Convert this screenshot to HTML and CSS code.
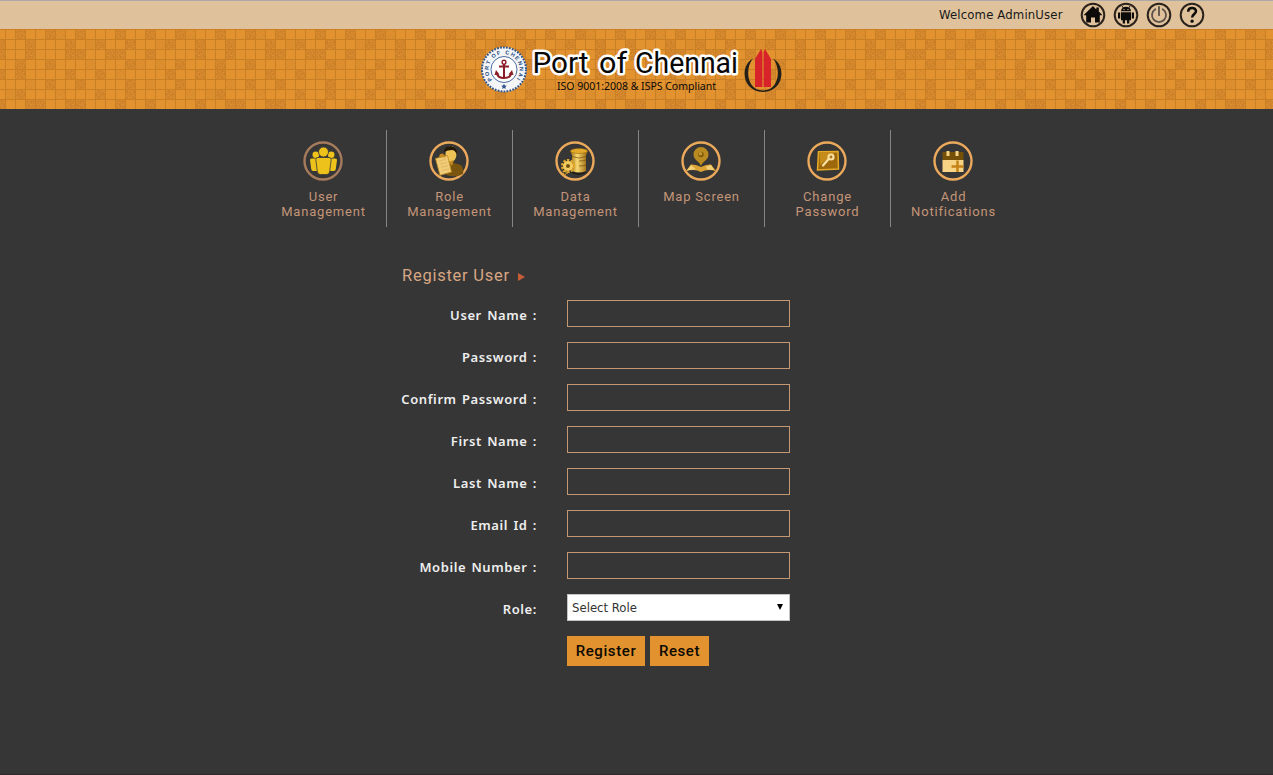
FILE: index.html
```
<!DOCTYPE html>
<html lang="en">
<head>
<meta charset="utf-8">
<title>Port of Chennai</title>
<link rel="stylesheet" href="styles.css">
</head>
<body>
<div class="topbar">
  <span class="welcome">Welcome AdminUser</span>
  <svg class="tool" viewBox="0 0 26 26"><circle class="ring" cx="13" cy="13" r="11.3"/><path d="M13 4 3.500 13.200h2.700V20.500h4.800v-5h4v5h4.800v-7.300h2.700l-3.700-3.600V5.500h-2.500v1.900z"/></svg>
  <svg class="tool" viewBox="0 0 26 26"><circle class="ring" cx="13" cy="13" r="11.3"/><path d="M8 9.300a5 4.500 0 0 1 10 0zM8 10.200h10v8H8zM5 10.400h2.200v6H5zM18.800 10.400H21v6h-2.200zM9.700 17.500H12v4H9.700zM14 17.500h2.300v4H14z"/><path d="m9 4 2 3m6-3-2 3" stroke="#111"/><circle class="eye" cx="11" cy="7.600" r=".7"/><circle class="eye" cx="15" cy="7.600" r=".7"/></svg>
  <svg class="tool" viewBox="0 0 26 26"><circle class="ring" cx="13" cy="13" r="11.3"/><path class="power" d="M9.300 7.200a7 7 0 1 0 7.400 0M13 4.800v8.400"/></svg>
  <svg class="tool" viewBox="0 0 26 26"><circle class="ring" cx="13" cy="13" r="11.3"/><path class="question" d="M9.200 9.800c0-5 7.800-4.700 7.800-.6 0 2.700-3.900 3-3.900 6.400"/><circle cx="13.100" cy="19.200" r="1.600"/></svg>
</div>

<header class="banner">
  <svg class="banner-art" width="1273" height="80" viewBox="0 0 1273 80">
    <defs>
      <pattern id="speck" width="7" height="7" patternUnits="userSpaceOnUse"><path fill="#d2852a" d="M0 0h7v7H0z"/><path fill="#dd9033" d="M1 0h1v1H1zM4 1h1v1H4zM2 3h1v1H2zM6 3h1v1H6zM0 5h1v1H0zM4 5h2v1H4z"/><path fill="#c97e27" d="M3 0h1v1H3zM0 2h1v1H0zM5 2h1v2H5zM2 5h1v1H2zM3 6h1v1H3z"/></pattern>
      <pattern id="tiles" x="5" width="200" height="80" patternUnits="userSpaceOnUse">
        <path fill="#e2932f" d="M0 0h200v80H0z"/>
        <path fill="url(#speck)" d="M10 0h10v10H10zM40 0h10v10H40zM70 0h10v10H70zM110 0h10v10h-10zM140 0h10v10h-10zM170 0h10v10h-10z
        M20 10h10v10H20zM60 10h10v10H60zM90 10h10v10H90zM120 10h10v10h-10zM160 10h10v10h-10zM190 10h10v10h-10z
        M20 20h10v10H20zM60 20h20v10H60zM100 20h20v10h-20zM140 20h10v10h-10zM190 20h10v10h-10z
        M10 30h10v20H10zM40 30h10v10H40zM120 30h10v10h-10zM170 30h10v10h-10z
        M60 40h10v10H60zM90 40h10v10H90zM160 40h10v10h-10zM190 40h10v10h-10z
        M40 50h10v10H40zM70 50h10v10H70zM120 50h10v20h-10zM170 50h10v10h-10z
        M10 60h10v10H10zM90 60h10v10H90zM160 60h10v10h-10z
        M20 70h20v10H20zM60 70h20v10H60zM110 70h10v10h-10zM140 70h10v10h-10zM190 70h10v10h-10z"/>
        <path fill="url(#speck)" opacity=".4" d="M50 0h10v10H50zM180 0h10v10h-10zM80 10h10v10H80zM150 10h10v10h-10zM80 30h10v10H80zM130 30h10v10h-10zM150 30h10v10h-10zM110 40h10v10h-10zM20 50h10v10H20zM140 50h10v10h-10zM0 60h10v10H0zM50 60h10v10H50zM180 60h10v10h-10z"/>
        <path fill="#c98025" d="M0 0h200v1H0zM0 10h200v1H0zM0 20h200v1H0zM0 30h200v1H0zM0 40h200v1H0zM0 50h200v1H0zM0 60h200v1H0zM0 70h200v1H0z"/>
        <path stroke="#c98025" stroke-width="80" stroke-dasharray="1 9" d="M0 40h200"/>
      </pattern>
      <path id="sealArc" d="M493 51.500a15.500 15.500 0 1 1 22 0"/>
    </defs>
    <path fill="url(#tiles)" d="M0 0h1273v80H0z"/>
    <!-- seal -->
    <circle cx="504" cy="40.500" r="22.500" fill="#f4f5f7"/>
    <circle cx="504" cy="40.500" r="22" fill="none" stroke="#305489" stroke-width="2" stroke-dasharray="1.800 1.200"/>
    <circle cx="504" cy="40.500" r="13" fill="#fff" stroke="#4a6aa0" stroke-width="1"/>
    <text class="seal-text"><textPath href="#sealArc" startOffset="1" textLength="69" lengthAdjust="spacing">PORT OF CHENNAI</textPath></text>
    <path fill="#2d4f86" d="m504 54.800.8 1.800 2 .1-1.500 1.300.5 2-1.800-1.100-1.800 1.100.5-2-1.500-1.300 2-.1z"/>
    <g fill="none" stroke="#891c25" stroke-width="2"><circle cx="504" cy="33.200" r="1.900" stroke-width="1.400"/><path d="M504 35v14M499 37.500h10M497 44.500c.5 3 3.500 4.500 7 4.500s6.500-1.500 7-4.500"/></g>
    <path fill="#891c25" d="m494.500 46 1.500-5 3.500 4.500zM513.500 46l-1.500-5-3.500 4.500z"/>
    <g class="brand">
      <text x="532.500" y="44" textLength="56" lengthAdjust="spacingAndGlyphs">Port</text>
      <text x="599" y="44" textLength="28" lengthAdjust="spacingAndGlyphs">of</text>
      <text x="635" y="44" textLength="103" lengthAdjust="spacingAndGlyphs">Chennai</text>
    </g>
    <text class="tagline" x="557" y="61" textLength="159" lengthAdjust="spacingAndGlyphs">ISO 9001:2008 &amp; ISPS Compliant</text>
    <!-- twin tower emblem -->
    <path fill="#222019" d="M753 29.500C740 36 741 62 763 63c22-1 23-27 10-33.500 8 9 7 31.500-10 32-17-.5-18-23-10-32z"/>
    <path fill="#d72329" d="M755 58V30l6-10 1.400 3v35zM763.600 58V23l1.400-3 6 10v28z"/>
  </svg>
</header>

<nav class="menu">
  <a class="item"><svg class="badge" viewBox="0 0 40 40"><circle class="halo dim" cx="20" cy="20" r="18.500"/><g fill="#edc21b"><circle cx="12.800" cy="13.800" r="3.300"/><circle cx="28.200" cy="13.800" r="3.300"/><path d="M7 19q0-1.500 1.500-1.500H14L15 30h-5q-1.500 0-1.800-2zM34 19q0-1.500-1.500-1.500H27L26 30h5q1.500 0 1.800-2z"/></g><g fill="#edc21b" stroke="#363636" stroke-width=".8"><circle cx="20.500" cy="11" r="5"/><path d="M12.800 18.500q0-2 2-2h11.400q2 0 2 2l-1.500 12q-.4 3-3 3h-6.400q-2.600 0-3-3z"/></g></svg><span>User Management</span></a>
  <a class="item"><svg class="badge" viewBox="0 0 40 40"><circle class="halo" cx="20" cy="20" r="18.500"/><path fill="#7a5510" d="M17 34c0-7 3-11 8-12l7 2q3 3 2 9-5 3-13 2z"/><ellipse cx="22" cy="13" rx="5.500" ry="8" fill="#efc356"/><path fill="#241a08" d="M15 11q0-6 7-6 7 1 6 9-2-5-5-5-4 0-8 2z"/><path fill="#c28a20" d="m19 21 6-2-2 6z"/><path fill="#f0cc78" stroke="#c08a20" stroke-width=".8" d="m6.500 17.500 12-3 4 16.500-11.500 3.300z"/><path fill="#c48920" d="m10 16 1-3 3-.5 2 2 .5 2z"/><path d="m10 20 7-1.800m-6 5 7-1.800m-6 5 7-1.800m-6 5 7-1.800" stroke="#d2a24a" stroke-width=".5"/></svg><span>Role Management</span></a>
  <a class="item"><svg class="badge" viewBox="0 0 40 40"><defs><linearGradient id="gold"><stop stop-color="#9b6607"/><stop offset=".4" stop-color="#f9d974"/><stop offset="1" stop-color="#946006"/></linearGradient></defs><circle class="halo" cx="20" cy="20" r="18.500"/><path fill="#211d16" d="M15 31q9 6 17 0z"/><path fill="url(#gold)" d="M15 10l2 4v16q7 3 14 0V14l2-4z"/><path fill="none" stroke="#73500c" stroke-width=".7" d="M17 15.500q7 3 14 0M24 20q4 0 7-1M24 25q4 0 7-1"/><ellipse cx="24" cy="10" rx="8.500" ry="2.500" fill="#e4aa2a" stroke="#9b6910" stroke-width=".6"/><circle cx="13" cy="25" r="5.700" fill="none" stroke="#dea626" stroke-width="2.800" stroke-dasharray="2.200 1.400"/><circle cx="13" cy="25" r="3.500" fill="#70500e" stroke="#f3cb60" stroke-width="3"/><circle cx="10" cy="31.500" r="2" fill="none" stroke="#e2a72a" stroke-width="1.500" stroke-dasharray="1.200 .8"/></svg><span>Data Management</span></a>
  <a class="item"><svg class="badge" viewBox="0 0 40 40"><circle class="halo" cx="20" cy="20" r="18.500"/><path fill="#dda334" d="m4.500 30.500 5.500-7q5-.5 10 2.500 5-3 10-2.500l5.500 7q-8.500-3-15.500.5-7-3.500-15.500-.5z"/><path fill="#f2ce79" d="m10 24 5 4.500-9 .7zM30 24l-5 1.500 1 3 7 .5z"/><path fill="#b98a20" d="M20 25c-2-5-7.500-6-7.500-11.500a7.500 7.500 0 0 1 15 0C27.500 19 22 20 20 25z"/><circle cx="20" cy="13.500" r="2.700" fill="#7d590c"/><circle cx="19.500" cy="12.800" r="1.700" fill="#c99a30"/></svg><span>Map Screen</span></a>
  <a class="item"><svg class="badge" viewBox="0 0 40 40"><circle class="halo" cx="20" cy="20" r="18.500"/><path fill="#9c680b" stroke="#e7aa27" stroke-width="1.500" d="m11.500 10.800 19.500-.3.500 17.500-21 1z"/><path fill="#c58c1c" d="m12.500 12 16-.8-15.500 12.800z"/><path stroke="#fae0a0" stroke-width="2.300" stroke-linecap="round" d="m16 24.500 6.500-7.500"/><circle cx="24" cy="16" r="2.500" fill="#aa7618" stroke="#fae0a0" stroke-width="2.200"/></svg><span>Change Password</span></a>
  <a class="item"><svg class="badge" viewBox="0 0 40 40"><circle class="halo" cx="20" cy="20" r="18.500"/><path fill="#755009" d="M9.500 11h21v8h-21z"/><path fill="#f7d386" d="M9.500 19h21v12h-21zM13.500 10h3v5h-3zM22.500 10h3v5h-3z"/><path d="M18.500 25.500h12M24.500 19.500V31" stroke="#c58317" stroke-width="2.500"/></svg><span>Add Notifications</span></a>
</nav>

<main class="register">
  <h1 class="heading">Register User<i class="arrow"></i></h1>
  <form class="form">
    <label class="label">User Name :</label><input class="field">
    <label class="label">Password :</label><input class="field">
    <label class="label">Confirm Password :</label><input class="field">
    <label class="label">First Name :</label><input class="field">
    <label class="label">Last Name :</label><input class="field">
    <label class="label">Email Id :</label><input class="field">
    <label class="label">Mobile Number :</label><input class="field">
    <label class="label">Role:</label><div class="select"><span>Select Role</span><i class="caret"></i></div>
    <div class="actions"><button type="button" class="button primary">Register</button><button type="button" class="button secondary">Reset</button></div>
  </form>
</main>
</body>
</html>
```
FILE: styles.css
```
* { box-sizing: border-box; }
body {
  margin: 0;
  height: 775px;
  overflow: hidden;
  background: #363636;
  border-bottom: 1px solid #30292b;
  font-family: "DejaVu Sans Condensed", "Noto Sans", sans-serif;
}
.topbar {
  height: 29px;
  padding: 0 68px 1px 0;
  display: flex;
  align-items: center;
  justify-content: flex-end;
  gap: 7px;
  border-top: 1px solid #aaa9a8;
  background: #dfc29c;
}
.welcome {
  width: 123px;
  margin-right: 11px;
  white-space: nowrap;
  font-family: "DejaVu Sans Condensed", sans-serif;
  font-size: 13px;
  letter-spacing: .15px;
  color: #181818;
}
.tool { width: 26px; height: 26px; fill: #0d0b09; }
.ring { fill: none; stroke: #2a221b; stroke-width: 2; }
.eye { fill: #dfc29c; }
.power { fill: none; stroke: #5b5147; stroke-width: 1.8; stroke-linecap: round; }
.question { fill: none; stroke: #0d0b09; stroke-width: 2.5; }
.banner { height: 80px; background: #e2932f; }
.banner-art { display: block; }
.brand {
  font: 400 30px Roboto, sans-serif;
  fill: #080808;
  stroke: #fff;
  stroke-width: 5px;
  stroke-linejoin: round;
  paint-order: stroke;
}
.tagline { font: 11px "Noto Sans", sans-serif; fill: #080808; }
.seal-text { font: bold 5.5px "Liberation Sans", sans-serif; fill: #244a82; }
.menu {
  width: 756px;
  margin: 21px 0 0 261px;
  display: grid;
  grid-template-columns: repeat(6, 126px);
}
.item {
  height: 97px;
  padding-top: 11px;
  display: flex;
  flex-direction: column;
  align-items: center;
  border-right: 1px solid #858585;
  color: #c49578;
  font: 13px/15px Roboto, sans-serif;
  letter-spacing: .8px;
  text-align: center;
}
.item:last-child { border-right-color: transparent; }
.item span { width: 92px; margin-top: 8px; }
.badge { width: 40px; height: 40px; margin-right: 1px; }
.halo { fill: none; stroke: #eba95c; stroke-width: 2.4; }
.halo.dim { stroke: #a57b5c; }
.register { width: 390px; margin: 37px 0 0 401px; }
.heading {
  margin: 0 0 12px 1px;
  height: 24px;
  display: flex;
  align-items: center;
  color: #d6a684;
  font: 400 16.5px/24px Roboto, sans-serif;
  letter-spacing: .75px;
}
.arrow {
  margin: 2px 0 0 8px;
  border-left: 7px solid #c65d39;
  border-top: 4px solid transparent;
  border-bottom: 4px solid transparent;
}
.form {
  display: grid;
  grid-template-columns: 136px 223px;
  grid-auto-rows: 27px;
  gap: 15px 30px;
}
.label {
  padding: 3px 0 0;
  color: #eee;
  font: 600 13px/24px "Noto Sans", sans-serif;
  letter-spacing: .6px;
  word-spacing: 1.3px;
  text-align: right;
  white-space: nowrap;
  direction: ltr;
}
.field {
  width: 223px;
  height: 27px;
  border: 1px solid #c49873;
  background: transparent;
  color: #eee;
}
.select {
  padding: 0 6px 0 4px;
  display: flex;
  align-items: center;
  justify-content: space-between;
  border: 1px solid #c4c4c4;
  background: #fff;
  color: #333;
  font: 13px "DejaVu Sans Condensed", sans-serif;
}
.caret {
  margin-top: -2px;
  border-top: 6px solid #000;
  border-left: 3.5px solid transparent;
  border-right: 3.5px solid transparent;
}
.actions { grid-column: 2; display: flex; gap: 5px; height: 30px; }
.button {
  height: 30px;
  padding: 0;
  border: 0;
  background: #e2932f;
  color: #0d0903;
  font: 500 15px Roboto, sans-serif;
  letter-spacing: .6px;
}
.primary { width: 78px; }
.secondary { width: 59px; }
```
